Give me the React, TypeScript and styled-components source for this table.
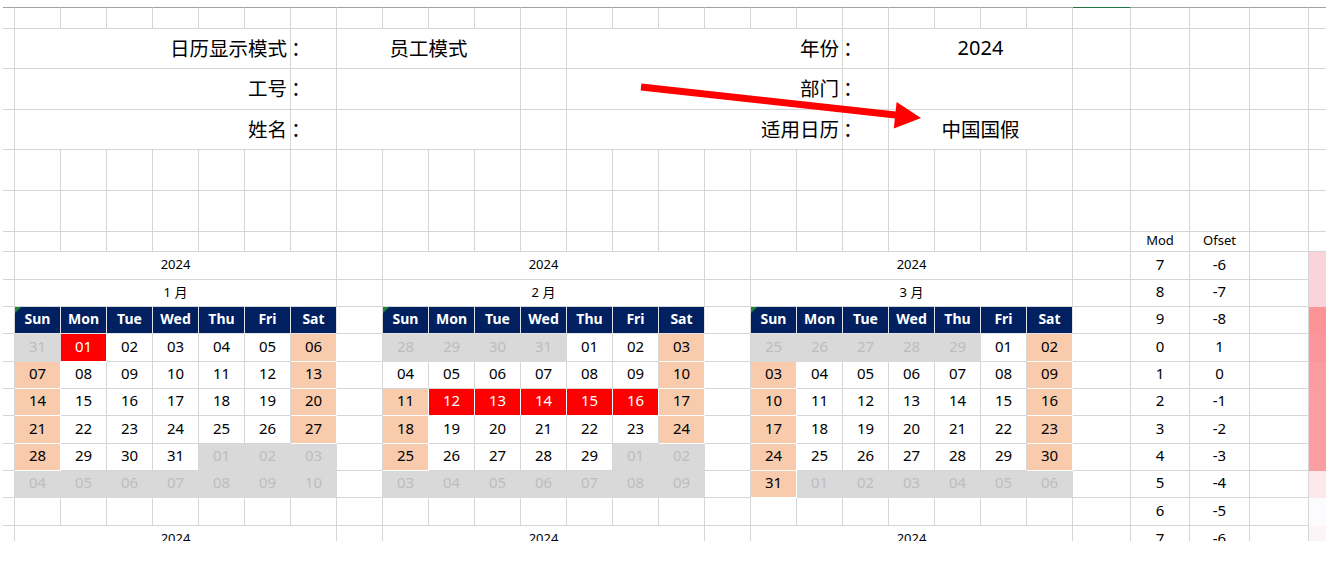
import React from "react";
import styled, { createGlobalStyle, css } from "styled-components";

const GRID = "#d6d6d6";
const LATIN = `"Noto Sans", "Noto Sans CJK SC", sans-serif`;
const CJK = `"Noto Sans CJK SC", "Noto Sans", sans-serif`;

const GlobalStyle = createGlobalStyle`
  html, body { margin: 0; padding: 0; background: #ffffff; overflow: hidden; }
  body { font-family: ${LATIN}; color: #000; }
`;

const Page = styled.div`
  position: relative;
  width: 1326px;
  height: 563px;
  overflow: hidden;
  background: #fff;
`;

const Sheet = styled.div`
  margin: 7px 0 0 3px;
  width: 1323px;
  height: 534px;
  overflow: hidden;
  display: grid;
  grid-template-columns: 12px repeat(23, 46px) 58px 59px 60px 59px 40px;
  grid-template-rows:
    22px 40px 41px 40px 41px 41px 20px 28px 27px 27px 28px 27px 27px 28px
    27px 27px 28px 28px;
`;

type Edge = "gray" | "green";

const Cell = styled.div<{ $span?: number; $edge?: Edge }>`
  grid-column: span ${({ $span }) => $span ?? 1};
  box-sizing: border-box;
  position: relative;
  min-width: 0;
  display: flex;
  align-items: center;
  justify-content: center;
  overflow: hidden;
  white-space: nowrap;
  background: #fff;
  border-right: 1px solid ${GRID};
  border-bottom: 1px solid ${GRID};
  ${({ $edge }) =>
    $edge &&
    css`
      border-top: 1px solid ${$edge === "green" ? "#217346" : "#a3a3a3"};
    `}
`;

const LabelCell = styled(Cell)`
  justify-content: flex-end;
  padding: 0 3px 3px 0;
  font-family: ${CJK};
  font-size: 19.5px;
`;

const ColonCell = styled(Cell)`
  justify-content: flex-start;
  padding: 0 0 3px 0;
  font-family: ${CJK};
  font-size: 19.5px;
`;

const ValueCell = styled(Cell)<{ $latin?: boolean }>`
  padding-bottom: 3px;
  font-family: ${({ $latin }) => ($latin ? LATIN : CJK)};
  font-size: ${({ $latin }) => ($latin ? "20px" : "19.5px")};
`;

const CaptionCell = styled(Cell)`
  padding-bottom: 4px;
  font-size: 13px;
`;

const DayHead = styled(Cell)<{ $flag?: boolean }>`
  padding-bottom: 4px;
  background: #002060;
  color: #fff;
  font-weight: 700;
  font-size: 14px;
  border-color: #e2e4ea;
  ${({ $flag }) =>
    $flag &&
    css`
      &::before {
        content: "";
        position: absolute;
        top: 0;
        left: 0;
        border-top: 6px solid #1f8a3c;
        border-right: 6px solid transparent;
      }
    `}
`;

type Kind = "n" | "w" | "h" | "o";

const DAY_LOOK: Record<Kind, { bg: string; fg: string; line: string }> = {
  n: { bg: "#ffffff", fg: "#000000", line: GRID },
  w: { bg: "#f8cbad", fg: "#000000", line: "#ffffff" },
  h: { bg: "#ff0000", fg: "#ffffff", line: "#ffffff" },
  o: { bg: "#d9d9d9", fg: "#bdbdbd", line: "#d9d9d9" },
};

const DayCell = styled(Cell)<{ $kind: Kind }>`
  padding-bottom: 4px;
  font-size: 15px;
  background: ${({ $kind }) => DAY_LOOK[$kind].bg};
  color: ${({ $kind }) => DAY_LOOK[$kind].fg};
  border-color: ${({ $kind }) => DAY_LOOK[$kind].line};
`;

const NumCell = styled(Cell)`
  padding-bottom: 4px;
  font-size: 15px;
`;

const HeadCaption = styled(Cell)`
  padding-bottom: 4px;
  font-size: 13px;
`;

const HeatCell = styled(Cell)<{ $fill: string }>`
  background: ${({ $fill }) => $fill};
  border-color: ${({ $fill }) => $fill};
`;

const Arrow = styled.svg`
  position: absolute;
  left: 0;
  top: 0;
  pointer-events: none;
`;

const MONTHS: string[][] = [
  [
    "31o 01h 02 03 04 05 06w",
    "07w 08 09 10 11 12 13w",
    "14w 15 16 17 18 19 20w",
    "21w 22 23 24 25 26 27w",
    "28w 29 30 31 01o 02o 03o",
    "04o 05o 06o 07o 08o 09o 10o",
  ],
  [
    "28o 29o 30o 31o 01 02 03w",
    "04 05 06 07 08 09 10w",
    "11w 12h 13h 14h 15h 16h 17w",
    "18w 19 20 21 22 23 24w",
    "25w 26 27 28 29 01o 02o",
    "03o 04o 05o 06o 07o 08o 09o",
  ],
  [
    "25o 26o 27o 28o 29o 01 02w",
    "03w 04 05 06 07 08 09w",
    "10w 11 12 13 14 15 16w",
    "17w 18 19 20 21 22 23w",
    "24w 25 26 27 28 29 30w",
    "31w 01o 02o 03o 04o 05o 06o",
  ],
];

const WEEK = ["Sun", "Mon", "Tue", "Wed", "Thu", "Fri", "Sat"];

const TAIL = [
  { mod: "7", ofs: "-6", heat: "#fad4d8" },
  { mod: "8", ofs: "-7", heat: "#fad4d8" },
  { mod: "9", ofs: "-8", heat: "#fb9397" },
  { mod: "0", ofs: "1", heat: "#fb979b" },
  { mod: "1", ofs: "0", heat: "#fa9ca0" },
  { mod: "2", ofs: "-1", heat: "#fa9ea2" },
  { mod: "3", ofs: "-2", heat: "#fa9ea2" },
  { mod: "4", ofs: "-3", heat: "#fa9ea2" },
  { mod: "5", ofs: "-4", heat: "#fde9ec" },
  { mod: "6", ofs: "-5", heat: "#fcfbfd" },
  { mod: "7", ofs: "-6", heat: "#fcf4f7" },
];

const HEADER = [
  ["日历显示模式", "员工模式", "年份", "2024"],
  ["工号", "", "部门", ""],
  ["姓名", "", "适用日历", "中国国假"],
];

export default function App() {
  let n = 0;
  const k = () => `c${n++}`;
  const blanks = (count: number) =>
    Array.from({ length: count }, () => <Cell key={k()} />);

  const cells: React.ReactNode[] = [];

  // row 1
  for (let c = 0; c < 29; c++) {
    cells.push(<Cell key={k()} $edge={c === 24 ? "green" : "gray"} />);
  }

  // header rows
  HEADER.forEach(([l1, v1, l2, v2]) => {
    cells.push(<Cell key={k()} />);
    cells.push(
      <LabelCell key={k()} $span={6}>
        {l1}
      </LabelCell>
    );
    cells.push(<ColonCell key={k()}>：</ColonCell>);
    cells.push(
      <ValueCell key={k()} $span={4}>
        {v1}
      </ValueCell>
    );
    cells.push(<Cell key={k()} />);
    cells.push(
      <LabelCell key={k()} $span={6}>
        {l2}
      </LabelCell>
    );
    cells.push(<ColonCell key={k()}>：</ColonCell>);
    cells.push(
      <ValueCell key={k()} $span={4} $latin={/^\d+$/.test(v2)}>
        {v2}
      </ValueCell>
    );
    cells.push(...blanks(5));
  });

  // rows 5-6
  cells.push(...blanks(29 * 2));

  // row 7
  cells.push(...blanks(25));
  cells.push(<HeadCaption key={k()}>Mod</HeadCaption>);
  cells.push(<HeadCaption key={k()}>Ofset</HeadCaption>);
  cells.push(...blanks(2));

  const tail = (i: number) => {
    const t = TAIL[i];
    cells.push(<Cell key={k()} />);
    cells.push(<NumCell key={k()}>{t.mod}</NumCell>);
    cells.push(<NumCell key={k()}>{t.ofs}</NumCell>);
    cells.push(<Cell key={k()} />);
    cells.push(<HeatCell key={k()} $fill={t.heat} />);
  };

  const calRow = (i: number, part: (m: number) => React.ReactNode[]) => {
    cells.push(<Cell key={k()} />);
    for (let m = 0; m < 3; m++) {
      cells.push(...part(m));
      if (m < 2) cells.push(<Cell key={k()} />);
    }
    tail(i);
  };

  // row 8: year
  calRow(0, () => [
    <CaptionCell key={k()} $span={7}>
      2024
    </CaptionCell>,
  ]);
  // row 9: month
  calRow(1, (m) => [
    <CaptionCell key={k()} $span={7}>
      {m + 1} 月
    </CaptionCell>,
  ]);
  // row 10: weekday heads
  calRow(2, () =>
    WEEK.map((d, i) => (
      <DayHead key={k()} $flag={i === 0}>
        {d}
      </DayHead>
    ))
  );
  // weeks
  for (let w = 0; w < 6; w++) {
    calRow(3 + w, (m) =>
      MONTHS[m][w].split(" ").map((tok) => {
        const num = tok.slice(0, 2);
        const kind = (tok[2] ?? "n") as Kind;
        return (
          <DayCell key={k()} $kind={kind}>
            {num}
          </DayCell>
        );
      })
    );
  }
  // blank row
  calRow(9, () => blanks(7));
  // next year heads
  calRow(10, () => [
    <CaptionCell key={k()} $span={7}>
      2024
    </CaptionCell>,
  ]);

  return (
    <Page>
      <GlobalStyle />
      <Sheet>{cells}</Sheet>
      <Arrow width="1326" height="563" viewBox="0 0 1326 563">
        <line
          x1="641"
          y1="87"
          x2="900"
          y2="115.5"
          stroke="#ff0000"
          strokeWidth="7"
        />
        <polygon points="921,118 896.6,102 893.8,128.5" fill="#ff0000" />
      </Arrow>
    </Page>
  );
}
